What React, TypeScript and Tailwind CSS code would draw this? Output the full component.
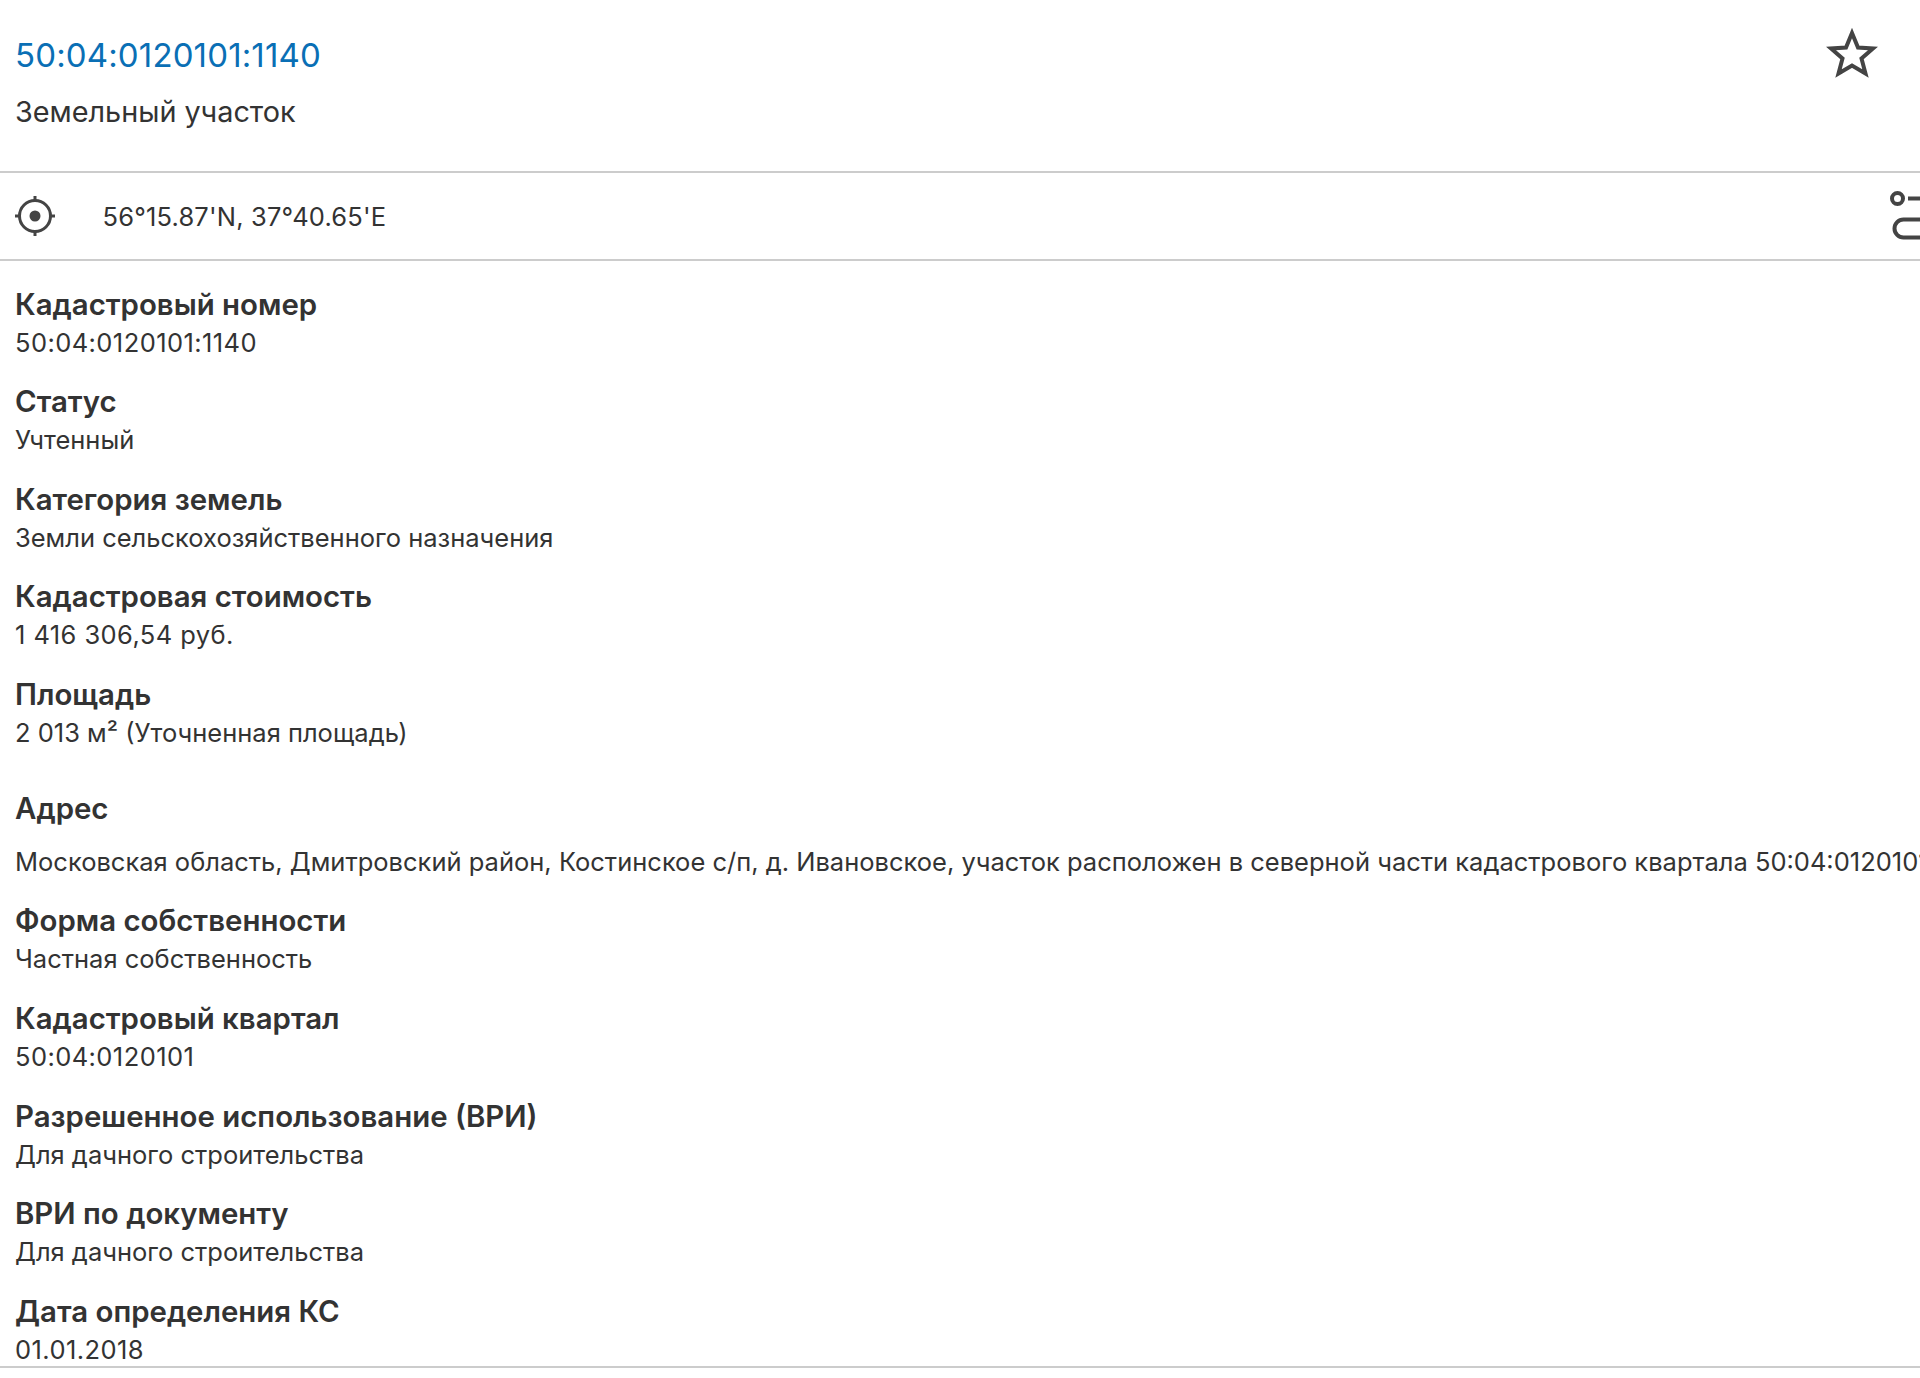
const rowsA = [
  { l: "Кадастровый номер", v: "50:04:0120101:1140", n: true },
  { l: "Статус", v: "Учтенный" },
  { l: "Категория земель", v: "Земли сельскохозяйственного назначения" },
  { l: "Кадастровая стоимость", v: "1 416 306,54 руб.", n: true },
  { l: "Площадь", v: "2 013 м² (Уточненная площадь)" },
];
const rowsB = [
  { l: "Форма собственности", v: "Частная собственность" },
  { l: "Кадастровый квартал", v: "50:04:0120101", n: true },
  { l: "Разрешенное использование (ВРИ)", v: "Для дачного строительства" },
  { l: "ВРИ по документу", v: "Для дачного строительства" },
];

function Row({ label, value, numeric, last }: { label: string; value: string; numeric?: boolean; last?: boolean }) {
  return (
    <div className={last ? "h-[85px] pt-[10px]" : "h-[97.6px] pt-[10px]"}>
      <div className="text-[29.4px] leading-[41px] font-semibold text-[#333333]">{label}</div>
      <div className={numeric ? "text-[25.5px] leading-[36px] tracking-[0.42px] text-[#333333]" : "text-[25.5px] leading-[36px] text-[#333333]"}>{value}</div>
    </div>
  );
}

export default function App() {
  return (
    <div className="h-[1378px] w-[1920px] overflow-hidden bg-white font-['Inter',sans-serif]">
      <header className="flex h-[171px] items-start justify-between pl-[15px] pr-[42px] pt-[33px]">
        <div>
          <div className="text-[33px] leading-[44px] tracking-[0.14px] text-[#0a6fb5]">50:04:0120101:1140</div>
          <div className="mt-[13px] text-[28.8px] leading-[44px] text-[#333333]">Земельный участок</div>
        </div>
        <svg width="52" height="52" viewBox="0 0 52 52" className="mt-[-6px]" fill="none" stroke="#444444" strokeWidth="4">
          <path d="M26 6 L32 20.500 L47 21.500 L35.500 31.500 L39.500 46.500 L26 38.500 L12.500 46.500 L16.500 31.500 L5 21.500 L20 20.500 Z" />
        </svg>
      </header>
      <div className="flex h-[90px] items-center justify-between overflow-hidden border-y-2 border-[#cccccc] pl-[15px]">
        <div className="flex items-center">
          <svg width="40" height="40" viewBox="0 0 40 40" fill="none" stroke="#444444">
            <circle cx="20" cy="20" r="15.5" strokeWidth="3" />
            <circle cx="20" cy="20" r="5.5" fill="#444444" stroke="none" />
            <path d="M20 0v6M20 34v6M0 20h6M34 20h6" strokeWidth="3" />
          </svg>
          <span className="ml-[47.5px] pt-[3px] text-[25.5px] tracking-[0.17px] text-[#333333]">56°15.87'N, 37°40.65'E</span>
        </div>
        <svg width="30" height="52" viewBox="0 0 30 52" fill="none" stroke="#444444" strokeWidth="4" className="shrink-0">
          <circle cx="7.500" cy="8.500" r="5.500" />
          <path d="M18 8.500h12M30 29.500H13.500a9 9 0 0 0 0 18H30" />
        </svg>
      </div>
      <main className="pl-[15px] pt-[12.5px]">
        {rowsA.map((r) => <Row key={r.l} label={r.l} value={r.v} numeric={r.n} />)}
        <div className="h-[129px] pt-[28px]">
          <div className="text-[29.4px] leading-[39px] font-semibold text-[#333333]">Адрес</div>
          <div className="mt-[16px] whitespace-nowrap text-[25.5px] leading-[36px] text-[#333333]">Московская область, Дмитровский район, Костинское с/п, д. Ивановское, участок расположен в северной части кадастрового квартала 50:04:0120101</div>
        </div>
        {rowsB.map((r) => <Row key={r.l} label={r.l} value={r.v} numeric={r.n} />)}
        <Row label="Дата определения КС" value="01.01.2018" numeric last />
      </main>
      <div className="border-t-2 border-[#cccccc]" />
    </div>
  );
}
